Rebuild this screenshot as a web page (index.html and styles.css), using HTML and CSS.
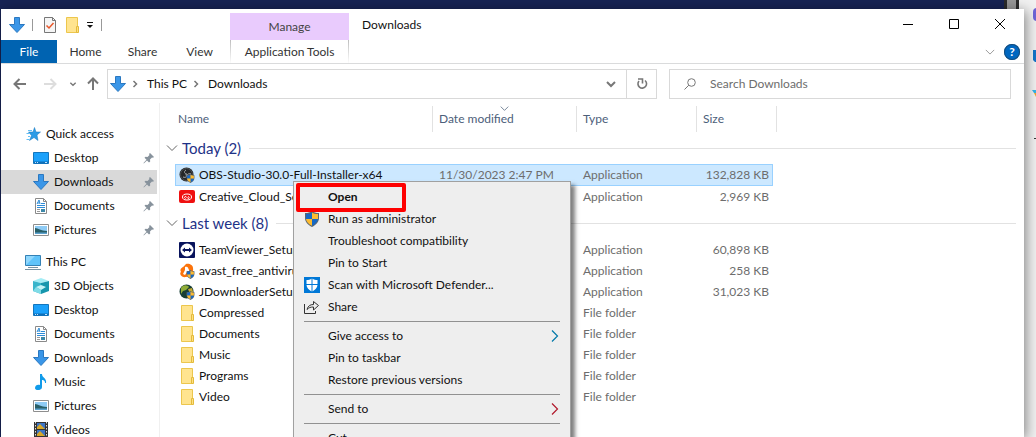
FILE: index.html
```html
<!DOCTYPE html>
<html lang="en">
<head>
<meta charset="utf-8">
<title>Downloads</title>
<link rel="stylesheet" href="styles.css">
</head>
<body>
<svg class="sprite" aria-hidden="true">
  <symbol id="down" viewBox="0 0 16 16"><path d="M5.5.5h5v7h5L8 15.500.5 7.500h5z" fill="#3a96e8" stroke="#2b78c0"/></symbol>
  <symbol id="folder" viewBox="0 0 16 16"><path d="M2.500.5h11v15h-11z" fill="#ffe48f" stroke="#ecc64d"/><path d="M12.500 9.500h2v6h-2z" fill="#ffdf80" stroke="#e3bb3c"/></symbol>
  <symbol id="desk" viewBox="0 0 16 16"><path d="M.5 2.500h15v11H.5z" fill="#1ba1fb" stroke="#1476bd"/><path d="M1 11.500h14v2H1z" fill="#0f6fb8"/><path d="M2 12.500h1m1 0h1m7 0h2" stroke="#bfe4ff"/></symbol>
  <symbol id="doc" viewBox="0 0 16 16"><path d="M2.500.5h8l3 3v12h-11z" fill="#fff" stroke="#8a8a8a"/><path d="M10.500.5v3h3" fill="none" stroke="#8a8a8a"/><path d="M4 6l2-4 1 4M4.500 5h2M8 5.500h4M4 7.500h8M4 9.500h8" fill="none" stroke="#2d8cd8"/><path d="M4 11.500h3M4 13.500h3" stroke="#999"/><path d="M8 11h4v3H8z" fill="#3d88a8"/></symbol>
  <symbol id="pic" viewBox="0 0 16 16"><path d="M.5 2.500h15v11H.5z" fill="#fff" stroke="#8e8e8e"/><path d="M2 4h12v8H2z" fill="#8ecbf5"/><path d="M2 6c3 0 6 3 12 3v3H2z" fill="#285f68"/><path d="M2 10.500h12V12H2z" fill="#5ba2cf"/></symbol>
  <symbol id="pc" viewBox="0 0 16 16"><path d="M.5 1.500h15v10H.5z" fill="#5fc3fa" stroke="#3481b5"/><path d="M1 11V2h9z" fill="#8fd7fd"/><path d="M3 13.500h10M0 15.500h16" stroke="#7893a4"/></symbol>
  <symbol id="cube" viewBox="0 0 16 16"><path d="M0 3l8-3 8 3-8 2z" fill="#a5edf5"/><path d="M0 3l8 2v11l-8-3z" fill="#38b5cb"/><path d="M16 3L8 5v11l8-3z" fill="#1696ad"/><path d="M3 9l5-2 5 2-5 3z" fill="#c5f4f7"/><path d="M0 13l3-4 5 3v4z" fill="#80dce7"/></symbol>
  <symbol id="music" viewBox="0 0 16 16"><path d="M7 0h2c0 4 5 4 4 9h-1c0-3-2-3-3-3v7c0 4-7 4-7 1 0-3 3-4 5-3z" fill="#119bea"/></symbol>
  <symbol id="video" viewBox="0 0 16 16"><path d="M1 0h14v16H1z" fill="#333"/><path d="M4 1h8v6H4zM4 8h8v6H4z" fill="#3d74c4"/><path d="M4 5l3-3 5 5H4zM4 12l3-3 5 5H4z" fill="#d8a828"/><path d="M2.500 0v16m11-16v16" stroke="#ddd" stroke-dasharray="1.500 1.500"/></symbol>
  <symbol id="star" viewBox="0 0 16 16"><path d="M9.500 1.500l1.500 4.500h4.500l-3.500 3 1 5.500-4-3-4.500 3 2-5-3-3.500h4.500z" fill="#2a9be6" stroke="#1677bd" stroke-width=".5"/><path d="M3 4.500h4M1.500 7.500h3M3 10.500h2M1.500 13.500h3" stroke="#63bff5"/></symbol>
  <symbol id="pin" viewBox="0 0 12 12"><path d="M7 1l4 4-1 .8-1-.2-2 2 .2 2L6 10.500 4 8.500.8 11.500.5 11l3-3.300L1.500 5.700 2.500 4.800l2 .2 2-2L6 2z" fill="#87929c"/></symbol>
  <symbol id="uac" viewBox="0 0 16 16"><path d="M8 0c2 1.500 4 2 7 2v5c0 4-3 7-7 9-4-2-7-5-7-9V2c3 0 5-.5 7-2z" fill="#5b6670"/><path d="M8 1.500V8H2V3c2.500 0 4.500-.5 6-1.500zM8 8h6c-.3 3-2.500 5-6 6.800z" fill="#1769c4"/><path d="M8 1.500V8h6V3c-2.500 0-4.500-.5-6-1.500zM8 8H2c.3 3 2.500 5 6 6.800z" fill="#fdbb30"/></symbol>
  <symbol id="obs" viewBox="0 0 16 16"><circle cx="7.500" cy="7.500" r="7" fill="#252729"/><circle cx="7.500" cy="7.500" r="6" fill="none" stroke="#4c5053"/><path d="M7 3c-3 2-1 4 1 4m4 0c-3-1-5 1-3 3M4 10c3 1 4 0 3-3" fill="none" stroke="#a4a8aa"/><use href="#uac" x="7" y="7" width="9" height="9"/></symbol>
  <symbol id="cc" viewBox="0 0 16 16"><rect y="1" width="16" height="13" rx="2" fill="#ef1010"/><ellipse cx="8" cy="8" rx="4.500" ry="3" fill="none" stroke="#fff"/><path d="M6.500 9.500c-1.500-.5-1-2.500.5-2l2 2c1.500.5 1.500-2 0-2" fill="none" stroke="#fff"/></symbol>
  <symbol id="tv" viewBox="0 0 16 16"><rect width="16" height="16" rx="1" fill="#08135c"/><circle cx="8" cy="8" r="6.500" fill="#fff"/><path d="M3 8l3-2.500V7h4V5.500L13 8l-3 2.500V9H6v1.500z" fill="#08135c"/></symbol>
  <symbol id="avast" viewBox="0 0 16 16"><path d="M7 1c3-1 7 1 7 4 1 5-3 9-7 9-5 1-7-4-5-5C0 5 4 5 7 1z" fill="#fb730b"/><path d="M6 4c3-1 3 1 4 3l1 3-3-1-2 3-2-1 2-4z" fill="#fff"/><use href="#uac" x="7" y="7" width="9" height="9"/></symbol>
  <symbol id="jd" viewBox="0 0 16 16"><circle cx="7.500" cy="7.500" r="7" fill="#173e35"/><path d="M2 4c2-4 7-3 8-1L7 6 4 7 2 10z" fill="#90ad38"/><path d="M9 5l4-1 1 4-3 2z" fill="#c6aa33"/><use href="#uac" x="7" y="7" width="9" height="9"/></symbol>
  <symbol id="defender" viewBox="0 0 16 16"><path d="M0 0h16v16H0z" fill="#0078d7"/><path d="M8 1.500c2 1.500 3.500 1.500 5.500 1.500v4c0 4-2.500 6-5.500 7.500C5 13 2.500 11 2.500 7V3C4.500 3 6 3 8 1.500z" fill="#fff"/><path d="M8 1v14M2 7.500h12" stroke="#0078d7"/></symbol>
  <symbol id="share" viewBox="0 0 16 16"><path d="M.5 5v9.500h11V12M3 10.500C4 7 6 5.500 9.500 5.500V2.500l5 4-5 4.500V8C6.500 8 5 8.500 3 10.500z" fill="none" stroke="#333"/></symbol>
  <symbol id="chev" viewBox="0 0 12 12"><path d="M1 3.500l5 5 5-5" fill="none" stroke="currentColor"/></symbol>
  <symbol id="bold" viewBox="0 0 12 12"><path d="M2 4l4 4 4-4" fill="none" stroke="currentColor" stroke-width="2"/></symbol>
  <symbol id="crumb" viewBox="0 0 8 8"><path d="M2.500 1l3 3-3 3" fill="none" stroke="#777" stroke-width="1.500"/></symbol>
  <symbol id="arrow" viewBox="0 0 12 12"><path d="M3 .5L8.500 6 3 11.500" fill="none" stroke="currentColor" stroke-width="1.200"/></symbol>
  <symbol id="left" viewBox="0 0 14 12"><path d="M13 6H1.500M6.500 1l-5 5 5 5" fill="none" stroke="currentColor" stroke-width="2"/></symbol>
</svg>
<div class="screen">
  <div class="side" aria-hidden="true">
    <svg width="14" height="150" viewBox="0 0 14 150"><rect x="11" y="8" width="12" height="13" rx="4" fill="#6f65d8"/><path d="M11 50h3v12h-1l-2-2z" fill="#1474c9"/><path d="M10 90h4v3h-2z" fill="#35b4e8"/><path d="M12 93l2 4v-4z" fill="#f3a62b"/><path d="M12 138.500h2" stroke="#333"/></svg>
  </div>
  <main class="window">
    <header class="title">
      <div class="quick">
        <svg class="icon"><use href="#down"/></svg><i></i>
        <svg class="icon" viewBox="0 0 16 16"><path d="M2.500.5h8l3 3v12h-11z" fill="#f5f5f5" stroke="#777"/><path d="M10.500.5v3h3" fill="none" stroke="#777"/><path d="M4.500 8.500l2.500 2.500 4.500-5" fill="none" stroke="#e8562a" stroke-width="1.500"/></svg>
        <svg class="icon"><use href="#folder"/></svg>
        <button class="plain" aria-label="Customize toolbar"><svg width="8" height="8" viewBox="0 0 8 8"><path d="M1 1.500h6" stroke="#111"/><path d="M1 4h6L4 7z" fill="#111"/></svg></button><i></i>
      </div>
      <div class="manage">Manage</div>
      <h1>Downloads</h1>
      <div class="controls">
        <button class="plain" aria-label="Minimize"><svg width="10" height="10"><path d="M0 5.500h10" stroke="#000"/></svg></button>
        <button class="plain" aria-label="Maximize"><svg width="10" height="10"><path d="M.5.5h9v9h-9z" stroke="#000" fill="none"/></svg></button>
        <button class="plain" aria-label="Close"><svg width="10" height="10"><path d="M0 0l10 10M10 0L0 10" stroke="#000"/></svg></button>
      </div>
    </header>
    <nav class="tabs">
      <button class="file">File</button><button>Home</button><button>Share</button><button>View</button><button class="tools">Application Tools</button>
      <div class="help"><button class="plain" aria-label="Expand ribbon"><svg width="10" height="10"><use href="#chev"/></svg></button><button class="round" aria-label="Help">?</button></div>
    </nav>
    <div class="bar">
      <div class="history">
        <button class="plain" aria-label="Back"><svg width="14" height="12"><use href="#left"/></svg></button>
        <button class="plain pale" aria-label="Forward"><svg width="14" height="12" viewBox="0 0 14 12"><path d="M1 6h11.500M7.500 1l5 5-5 5" fill="none" stroke="currentColor" stroke-width="2"/></svg></button>
        <button class="plain" aria-label="Recent"><svg width="8" height="8"><use href="#bold"/></svg></button>
        <button class="plain" aria-label="Up"><svg width="12" height="14" viewBox="0 0 12 14"><path d="M6 13V1.500M1 6.500l5-5 5 5" fill="none" stroke="currentColor" stroke-width="2"/></svg></button>
      </div>
      <div class="address">
        <svg class="icon"><use href="#down"/></svg><svg class="crumb"><use href="#crumb"/></svg><a href="#">This PC</a><svg class="crumb"><use href="#crumb"/></svg><a href="#">Downloads</a>
        <button class="plain drop" aria-label="Previous locations"><svg width="12" height="12"><use href="#bold"/></svg></button>
        <button class="plain refresh" aria-label="Refresh"><svg width="12" height="12" viewBox="0 0 12 12"><path d="M9 2.500A4.300 4.300 0 1 1 3 3" fill="none" stroke="#777" stroke-width="1.600"/><path d="M2 1h4.500v4.500" fill="none" stroke="#777" stroke-width="1.600"/></svg></button>
      </div>
      <label class="search"><svg width="12" height="12" viewBox="0 0 12 12"><circle cx="7.500" cy="4.500" r="3.800" fill="none" stroke="#777"/><path d="M4.800 7.200L.5 11.500" stroke="#777"/></svg><input type="text" placeholder="Search Downloads" aria-label="Search Downloads"></label>
    </div>
    <div class="body">
      <nav class="tree">
        <a class="root" href="#"><svg class="icon"><use href="#star"/></svg>Quick access</a>
        <a href="#"><svg class="icon"><use href="#desk"/></svg>Desktop<svg class="pin"><use href="#pin"/></svg></a>
        <a class="on" href="#"><svg class="icon"><use href="#down"/></svg>Downloads<svg class="pin"><use href="#pin"/></svg></a>
        <a href="#"><svg class="icon"><use href="#doc"/></svg>Documents<svg class="pin"><use href="#pin"/></svg></a>
        <a href="#"><svg class="icon"><use href="#pic"/></svg>Pictures<svg class="pin"><use href="#pin"/></svg></a>
        <a class="root pc" href="#"><svg class="icon"><use href="#pc"/></svg>This PC</a>
        <a href="#"><svg class="icon"><use href="#cube"/></svg>3D Objects</a>
        <a href="#"><svg class="icon"><use href="#desk"/></svg>Desktop</a>
        <a href="#"><svg class="icon"><use href="#doc"/></svg>Documents</a>
        <a href="#"><svg class="icon"><use href="#down"/></svg>Downloads</a>
        <a href="#"><svg class="icon"><use href="#music"/></svg>Music</a>
        <a href="#"><svg class="icon"><use href="#pic"/></svg>Pictures</a>
        <a href="#"><svg class="icon"><use href="#video"/></svg>Videos</a>
      </nav>
      <div class="list">
        <table>
          <colgroup><col class="c-pad"><col class="c-name"><col class="c-date"><col class="c-type"><col class="c-size"><col></colgroup>
          <thead><tr><td></td><th>Name</th><th class="line sorted">Date modified<svg class="sort" aria-hidden="true"><use href="#chev"/></svg></th><th class="line">Type</th><th class="line">Size</th><td class="end"></td></tr></thead>
          <tbody>
            <tr class="group"><th colspan="6"><div><svg width="12" height="12"><use href="#chev"/></svg><span>Today (2)</span></div></th></tr>
            <tr class="picked"><td></td><td><div><svg class="icon"><use href="#obs"/></svg>OBS-Studio-30.0-Full-Installer-x64</div></td><td>11/30/2023 2:47 PM</td><td>Application</td><td>132,828 KB</td><td></td></tr>
            <tr><td></td><td><div><svg class="icon"><use href="#cc"/></svg>Creative_Cloud_Set-Up</div></td><td></td><td>Application</td><td>2,969 KB</td><td></td></tr>
          </tbody>
          <tbody>
            <tr class="group"><th colspan="6"><div><svg width="12" height="12"><use href="#chev"/></svg><span>Last week (8)</span></div></th></tr>
            <tr><td></td><td><div><svg class="icon"><use href="#tv"/></svg>TeamViewer_Setup</div></td><td></td><td>Application</td><td>60,898 KB</td><td></td></tr>
            <tr><td></td><td><div><svg class="icon"><use href="#avast"/></svg>avast_free_antivirus</div></td><td></td><td>Application</td><td>258 KB</td><td></td></tr>
            <tr><td></td><td><div><svg class="icon"><use href="#jd"/></svg>JDownloaderSetup</div></td><td></td><td>Application</td><td>31,023 KB</td><td></td></tr>
            <tr><td></td><td><div><svg class="icon"><use href="#folder"/></svg>Compressed</div></td><td></td><td>File folder</td><td></td><td></td></tr>
            <tr><td></td><td><div><svg class="icon"><use href="#folder"/></svg>Documents</div></td><td></td><td>File folder</td><td></td><td></td></tr>
            <tr><td></td><td><div><svg class="icon"><use href="#folder"/></svg>Music</div></td><td></td><td>File folder</td><td></td><td></td></tr>
            <tr><td></td><td><div><svg class="icon"><use href="#folder"/></svg>Programs</div></td><td></td><td>File folder</td><td></td><td></td></tr>
            <tr><td></td><td><div><svg class="icon"><use href="#folder"/></svg>Video</div></td><td></td><td>File folder</td><td></td><td></td></tr>
          </tbody>
        </table>
      </div>
    </div>
  </main>
  <div class="menu" role="menu">
    <button role="menuitem" class="default">Open</button>
    <button role="menuitem"><svg class="icon"><use href="#uac"/></svg>Run as administrator</button>
    <button role="menuitem">Troubleshoot compatibility</button>
    <button role="menuitem">Pin to Start</button>
    <button role="menuitem"><svg class="icon"><use href="#defender"/></svg>Scan with Microsoft Defender...</button>
    <button role="menuitem"><svg class="icon"><use href="#share"/></svg>Share</button>
    <hr>
    <button role="menuitem">Give access to<svg class="more blue"><use href="#arrow"/></svg></button>
    <button role="menuitem">Pin to taskbar</button>
    <button role="menuitem">Restore previous versions</button>
    <hr>
    <button role="menuitem">Send to<svg class="more red"><use href="#arrow"/></svg></button>
    <hr>
    <button role="menuitem">Cut</button>
    <div class="mark"></div>
  </div>
</div>
</body>
</html>
```
FILE: styles.css
```css
* { box-sizing: border-box; }
body { margin: 0; font: 12px/16px Lato, "Open Sans", sans-serif; color: #111; }
button, input { font: inherit; color: inherit; }
button { margin: 0; padding: 0; border: 0; background: none; }
a { color: inherit; text-decoration: none; }
svg { flex: none; display: block; }
.sprite { position: absolute; width: 0; height: 0; }
.icon { width: 16px; height: 16px; }
.plain { display: grid; place-items: center; }

.screen { position: relative; height: 100vh; overflow: hidden; display: flex; padding: 9px 12px 0 1px; background: #172354; }
.side { position: absolute; top: 0; right: 0; bottom: 0; width: 32px; display: flex; justify-content: flex-end; background: linear-gradient(90deg, #2b2b2b 3px, #979797 3px, #979797 12px, #2b2b2b 12px, #2b2b2b 15px, #f1f1f1 15px); }
.window { position: relative; flex: 1; min-width: 0; display: flex; flex-direction: column; background: #fff; box-shadow: 2px 2px 12px rgba(0, 0, 0, .45); }

.title { display: flex; height: 31px; }
.quick { width: 229px; display: flex; align-items: center; padding-left: 8px; gap: 6px; }
.quick i { width: 1px; height: 12px; margin: 0 3px 0 1px; background: #999; }
.manage { width: 119px; margin-top: 4px; padding-top: 6px; text-align: center; background: #e9cbfd; color: #444; }
h1 { flex: 1; margin: 0; padding: 8px 13px; font-size: 12px; line-height: 16px; font-weight: 400; }
.controls { display: flex; padding-right: 1px; }
.controls button { width: 46px; height: 30px; }

.tabs { display: flex; height: 24px; border-bottom: 1px solid #dadbdc; color: #333; }
.tabs > button { width: 57px; }
.tabs .file { width: 56px; background: #0063b1; color: #fff; }
.tabs > .tools { width: 119px; margin-left: 2px; border: solid; border-width: 0 1px; border-image: linear-gradient(#bbb, #fff) 1; }
.help { flex: 1; display: flex; justify-content: flex-end; align-items: center; gap: 9px; padding-right: 4px; color: #888; }
.round { width: 16px; height: 16px; border-radius: 50%; background: #0067c0; box-shadow: 0 0 0 1px #174e7c inset; color: #fff; font-weight: 700; line-height: 16px; }

.bar { display: flex; padding: 5px 13px 4px 12px; }
.history { width: 94px; display: flex; align-items: center; gap: 10px; color: #777; }
.history .pale { margin: 0 2px 0 6px; color: #ddd; }
.address { flex: 1; display: flex; align-items: center; height: 30px; padding-left: 2px; border: 1px solid #d9d9d9; }
.crumb { width: 8px; height: 8px; margin: 0 8px 0 5px; }
.drop { width: 30px; height: 28px; margin-left: auto; color: #777; }
.refresh { width: 30px; height: 28px; border-left: 1px solid #d9d9d9; }
.search { width: 342px; margin-left: 12px; display: flex; align-items: center; gap: 14px; padding: 0 14px; border: 1px solid #d9d9d9; }
.search input { flex: 1; min-width: 0; padding: 0; border: 0; outline: 0; background: none; }
.search input::placeholder { color: #6d6d6d; opacity: 1; }

.body { flex: 1; min-height: 0; display: flex; overflow: hidden; }
.tree { width: 159px; padding: 19px 2px 0 0; border-right: 1px solid #f0f0f0; }
.tree a { display: flex; align-items: center; height: 24px; padding: 0 2px 0 32px; gap: 5px; }
.tree .root { padding-left: 24px; }
.tree .pc { margin-top: 8px; }
.tree .on { background: #d9d9d9; }
.pin { width: 12px; height: 12px; margin-left: auto; }

.list { flex: 1; min-width: 0; padding: 3px 8px 0 0; }
table { width: 100%; table-layout: fixed; border-collapse: separate; border-spacing: 0; color: #6d6d6d; }
.c-pad { width: 15px; }
.c-name { width: 257px; }
.c-date { width: 144px; }
.c-type { width: 120px; }
.c-size { width: 77px; }
th, td { padding: 0; font-weight: 400; text-align: left; white-space: nowrap; }
thead tr { height: 26px; color: #4c607a; }
thead th { padding-left: 3px; }
thead .line { padding-left: 6px; border-left: 1px solid #e2e2e2; }
thead .end { background: linear-gradient(#e2e2e2, #e2e2e2) 3px 0 / 1px 100% no-repeat; }
.sorted { position: relative; }
.sort { position: absolute; top: -2px; left: 67px; width: 9px; height: 9px; }
.group { height: 32px; color: #1e3287; font-size: 15px; }
.group div { display: flex; align-items: center; gap: 4px; padding: 0 0 0 6px; }
.group svg { color: #666; }
.group div::after { content: ""; flex: 1; height: 1px; margin-left: 4px; background: #e2e2e2; }
tbody td { height: 21px; padding-left: 7px; }
tbody td:nth-child(1) { padding: 0; }
tbody td:nth-child(2) { padding-left: 4px; color: #111; }
tbody td:nth-child(5) { padding: 0 4px 0 0; text-align: right; }
td > div { display: flex; align-items: center; gap: 4px; }
.picked td { height: 22px; }
.picked td:not(:first-child):not(:last-child) { background: #cce8ff; border: solid #99d1ff; border-width: 1px 0; }
.picked td:nth-child(2) { box-shadow: inset 1px 0 #99d1ff; }
.picked td:nth-child(5) { box-shadow: inset -1px 0 #99d1ff; }

.menu { position: absolute; left: 293px; top: 181px; width: 278px; padding: 4px 2px; background: #eee; border: 1px solid #a0a0a0; box-shadow: 4px 4px 4px rgba(0, 0, 0, .5); }
.menu button { position: relative; display: flex; align-items: center; width: 100%; height: 22px; padding: 0 7px 0 32px; }
.menu .icon { margin: 0 8px 0 -24px; }
.menu .default { font-weight: 700; }
.menu hr { height: 1px; margin: 3px 8px; border: 0; background: #919191; }
.more { width: 12px; height: 12px; margin-left: auto; }
.blue { color: #0078a8; }
.red { color: #b0182b; }
.mark { position: absolute; left: 2px; top: 1px; width: 110px; height: 29px; border: 4px solid #fe0000; border-radius: 2px; }
```
